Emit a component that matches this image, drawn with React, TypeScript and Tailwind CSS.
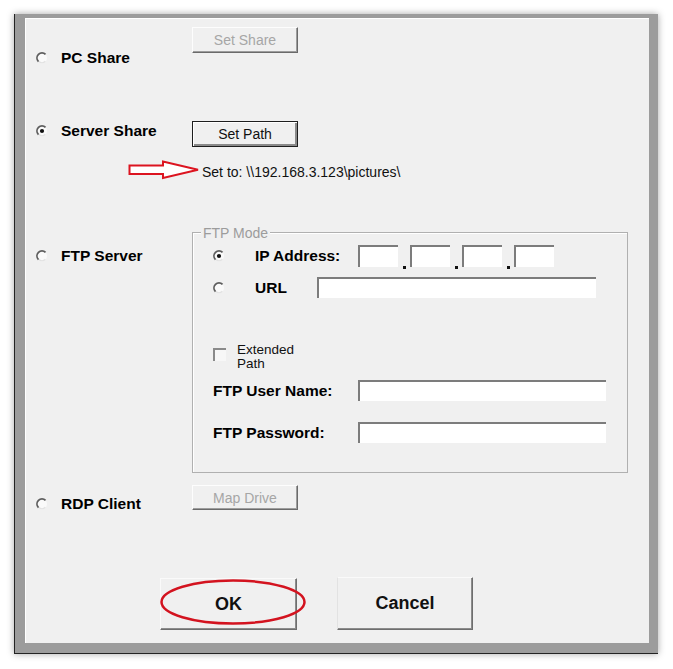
import React from "react";

const font = { fontFamily: '"Liberation Sans", Arial, sans-serif' };

function Radio({ checked = false }: { checked?: boolean }) {
  return (
    <svg width="12" height="12" viewBox="0 0 12 12" className="shrink-0">
      <circle cx="6" cy="6" r="5" fill="#fafafa" />
      <path d="M9.3 9.3 A4.7 4.7 0 0 1 2.7 9.3" fill="none" stroke="#e2e2e2" strokeWidth="1.2" />
      <path d="M2.46 9.54 A5 5 0 0 1 9.54 2.46" fill="none" stroke="#5e5e5e" strokeWidth="1.8" />
      {checked && <circle cx="6" cy="6" r="2.1" fill="#111" />}
    </svg>
  );
}

function Sunken({ className = "" }: { className?: string }) {
  return <div className={`bg-white border-t-2 border-l-2 border-[#7c7c7c] shrink-0 ${className}`} />;
}

function Btn({ label, disabled = false, isDefault = false, className = "" }: {
  label: string; disabled?: boolean; isDefault?: boolean; className?: string;
}) {
  const edge = isDefault
    ? "border border-[#1e1e1e] shadow-[inset_1px_1px_0_#ffffff,inset_-2px_-2px_0_#8a8a8a]"
    : "border border-t-[#fdfdfd] border-l-[#fdfdfd] border-r-[#6a6a6a] border-b-[#6a6a6a] shadow-[inset_-1px_-1px_0_#9d9d9d]";
  return (
    <div className={`bg-[#f0f0f0] flex items-center justify-center shrink-0 text-[14px] leading-5 ${edge} ${disabled ? "text-[#a6a6a6]" : "text-[#111]"} ${className}`}>
      {label}
    </div>
  );
}

function OptLabel({ checked = false, text }: { checked?: boolean; text: string }) {
  return (
    <div className="flex items-center gap-[13px] h-5">
      <Radio checked={checked} />
      <span className="text-[15.5px] font-bold text-black leading-5">{text}</span>
    </div>
  );
}

export default function App() {
  return (
    <div className="w-[673px] h-[669px] bg-white pt-[14px] pl-[14px]" style={font}>
      <div className="w-[644px] h-[640px] bg-[#9c9c9c] border-l border-b border-[#232323] pt-[4px] pl-[10px] pr-[9px] pb-[10px] shadow-[0_0_7px_rgba(0,0,0,0.35)]">
        <div className="relative w-full h-full bg-[#f0f0f0] shadow-[inset_1px_1px_0_#ffffff] flex flex-col">
          {/* PC Share */}
          <div className="flex mt-[9px]">
            <div className="w-[167px] pl-[11px] pt-[21px]">
              <OptLabel text="PC Share" />
            </div>
            <Btn label="Set Share" disabled className="w-[106px] h-[26px]" />
          </div>

          {/* Server Share */}
          <div className="flex mt-[53px]">
            <div className="w-[167px] pl-[11px]">
              <OptLabel checked text="Server Share" />
            </div>
            <Btn label="Set Path" isDefault className="w-[106px] h-[26px]" />
          </div>

          {/* Set to */}
          <div className="flex items-start mt-[13px] pl-[103px]">
            <svg width="72" height="20" viewBox="0 0 72 20" className="shrink-0">
              <path d="M1.5 5.5 H35 V1.5 L70 9.8 L35 18 V14 H1.5 Z" fill="#ffffff" stroke="#dc1420" strokeWidth="2" />
            </svg>
            <span className="ml-[2px] mt-[2px] text-[14px] leading-5 text-[#111]">Set to: \\192.168.3.123\pictures\</span>
          </div>

          {/* FTP Server */}
          <div className="flex mt-[50px]">
            <div className="w-[167px] pl-[11px] pt-[14px]">
              <OptLabel text="FTP Server" />
            </div>
            <div className="relative w-[436px] h-[241px] border border-[#b0b0b0] shadow-[inset_1px_1px_0_#ffffff] flex flex-col">
              <span className="absolute left-[8px] -top-[8px] px-[2px] bg-[#f0f0f0] text-[14px] leading-4 text-[#9c9c9c]">FTP Mode</span>

              <div className="flex items-center h-[22px] mt-[12px] pl-[20px]">
                <Radio checked />
                <span className="ml-[30px] w-[103px] text-[15.5px] font-bold leading-5 text-black">IP Address:</span>
                <div className="flex">
                  {[0, 1, 2, 3].map(i => (
                    <div key={i} className="flex">
                      <Sunken className="w-[40px] h-[22px]" />
                      {i < 3 && (
                        <div className="w-[12px] h-[22px] flex items-end justify-center">
                          <div className="w-[3px] h-[3px] bg-[#111] translate-y-[2px]" />
                        </div>
                      )}
                    </div>
                  ))}
                </div>
              </div>

              <div className="flex items-center h-[21px] mt-[10px] pl-[20px]">
                <Radio />
                <span className="ml-[30px] w-[62px] text-[15.5px] font-bold leading-5 text-black">URL</span>
                <Sunken className="w-[279px] h-[21px]" />
              </div>

              <div className="flex items-start mt-[45px] pl-[20px]">
                <div className="mt-[5px] w-[13px] h-[13px] border-t-2 border-l-2 border-[#8a8a8a] bg-[#f7f7f7] shrink-0" />
                <div className="ml-[11px] text-[13.5px] leading-[14px] text-[#111]">
                  <div className="h-[14px]">Extended</div>
                  <div className="h-[14px]">Path</div>
                </div>
              </div>

              <div className="flex items-center h-[21px] mt-[9px] pl-[20px]">
                <span className="w-[145px] text-[15.5px] font-bold leading-5 text-black">FTP User Name:</span>
                <Sunken className="w-[248px] h-[21px]" />
              </div>

              <div className="flex items-center h-[21px] mt-[21px] pl-[20px]">
                <span className="w-[145px] text-[15.5px] font-bold leading-5 text-black">FTP Password:</span>
                <Sunken className="w-[248px] h-[21px]" />
              </div>
            </div>
          </div>

          {/* RDP Client */}
          <div className="flex mt-[12px]">
            <div className="w-[167px] pl-[11px] pt-[9px]">
              <OptLabel text="RDP Client" />
            </div>
            <Btn label="Map Drive" disabled className="w-[106px] h-[25px]" />
          </div>

          {/* OK / Cancel */}
          <div className="flex items-start mt-[63px] pl-[135px]">
            <div className="relative mt-[1px]">
              <div className="w-[137px] h-[52px] bg-[#f0f0f0] border border-t-[#fafafa] border-l-[#fafafa] border-r-[#6e6e6e] border-b-[#6e6e6e] shadow-[inset_-1px_-1px_0_#8c8c8c] flex items-center justify-center text-[18px] font-bold text-[#111]">
                OK
              </div>
              <svg width="146" height="46" viewBox="0 0 146 46" className="absolute left-0 top-[1px] pointer-events-none">
                <ellipse cx="73" cy="23" rx="71.5" ry="21.5" fill="none" stroke="#d3131f" strokeWidth="2.5" />
              </svg>
            </div>
            <div className="ml-[40px] w-[136px] h-[53px] bg-[#f0f0f0] border border-t-[#fafafa] border-l-[#e2e2e2] border-r-[#6e6e6e] border-b-[#6e6e6e] shadow-[inset_-1px_-1px_0_#8c8c8c] flex items-center justify-center text-[18px] font-bold text-[#111]">
              Cancel
            </div>
          </div>
        </div>
      </div>
    </div>
  );
}
